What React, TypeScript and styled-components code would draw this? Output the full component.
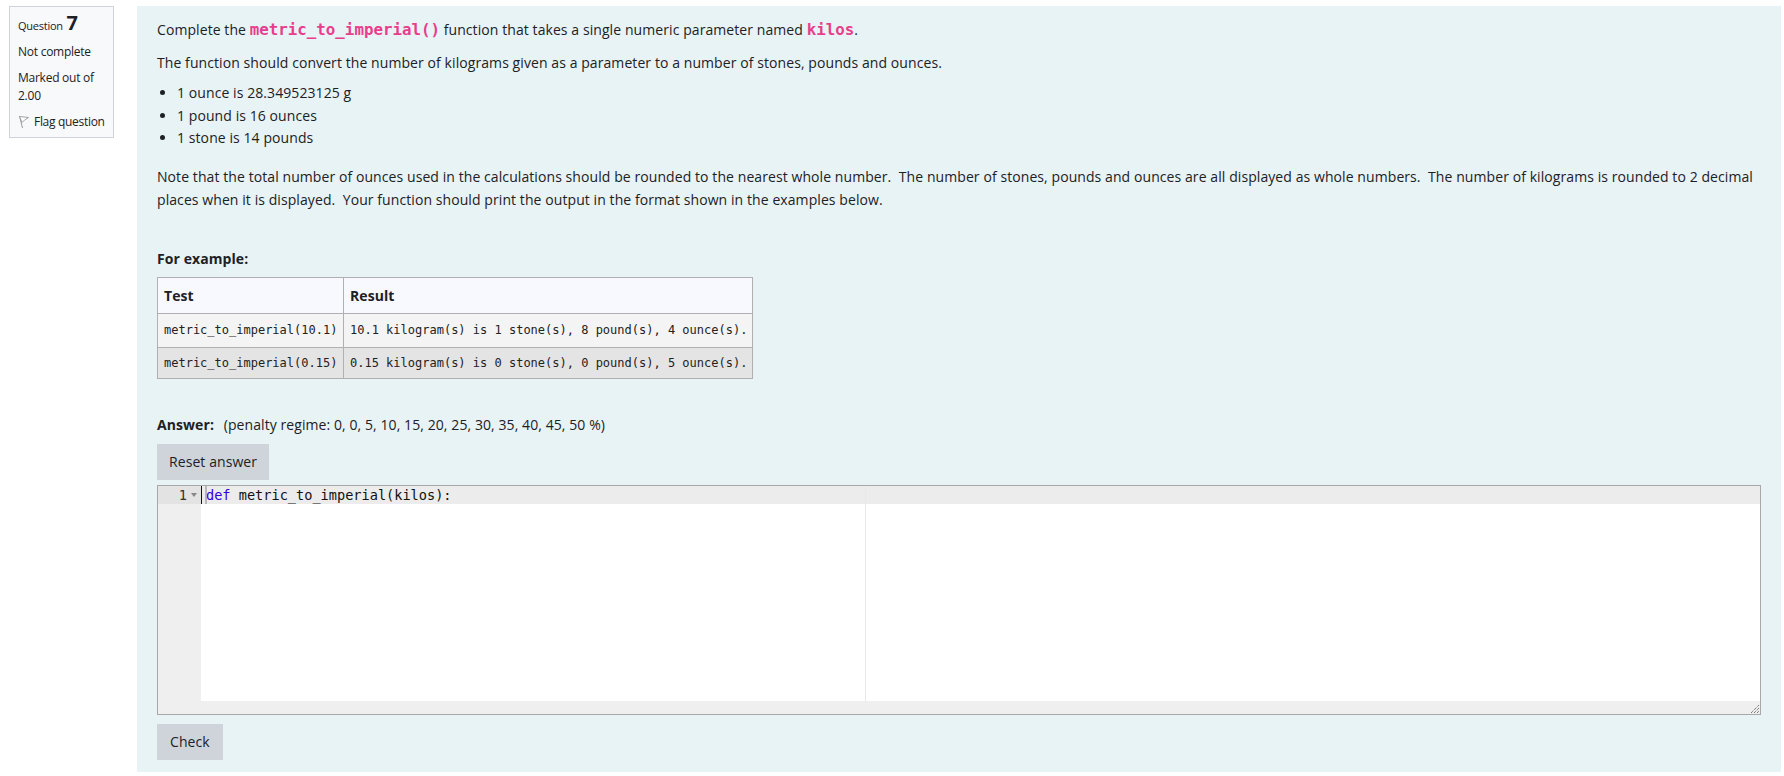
import React from "react";
import styled, { createGlobalStyle } from "styled-components";

const GlobalStyle = createGlobalStyle`
  html, body { margin: 0; padding: 0; background: #fff; }
  body {
    font-family: "Open Sans", "Noto Sans", sans-serif;
    font-size: 14px;
    color: #1d2125;
  }
`;

const Page = styled.div`
  display: flex;
  align-items: flex-start;
  height: 776px;
  padding: 6px 3px 4px 9px;
  box-sizing: border-box;
  overflow: hidden;
`;

const InfoBox = styled.aside`
  width: 105px;
  height: 132px;
  box-sizing: border-box;
  flex: none;
  margin-right: 23px;
  padding: 6px 8px 0;
  background: #f8f9fa;
  border: 1px solid #cfd4db;
  font-size: 12px;
  letter-spacing: -0.25px;
  line-height: 18px;
`;

const QuestionNo = styled.h3`
  margin: 0 0 7px;
  font-size: 11px;
  font-weight: 400;
  line-height: 20px;

  span {
    font-size: 20px;
    font-weight: 700;
    margin-left: 1px;
  }
`;

const InfoLine = styled.div`
  margin-bottom: 8px;
`;

const FlagRow = styled.div`
  display: flex;
  align-items: center;
  gap: 4px;
  margin-top: 8px;
  letter-spacing: -0.3px;
  white-space: nowrap;
`;

const Panel = styled.main`
  flex: 1;
  height: 766px;
  box-sizing: border-box;
  padding: 12px 20px 0;
  background: #e7f3f5;
  letter-spacing: 0.08px;
`;

const Para = styled.p`
  margin: 0;
  line-height: 23px;
`;

const IntroPara = styled(Para)<{ $gap: number }>`
  margin-bottom: ${({ $gap }) => $gap}px;
`;

const Inline = styled.code`
  font-family: "DejaVu Sans Mono", monospace;
  font-weight: 700;
  font-size: 15.8px;
  letter-spacing: 0;
  color: #e83e8c;
`;

const Bullets = styled.ul`
  margin: 0 0 15px;
  padding-left: 20px;

  li {
    line-height: 22.5px;
  }
`;

const Example = styled.h4`
  margin: 36px 0 6px;
  font-size: 14px;
  font-weight: 700;
  line-height: 24px;
`;

const Table = styled.table`
  border-collapse: collapse;
  width: 595px;
  table-layout: fixed;
  background: #f8f9ff;
`;

const HeadCell = styled.th<{ $wide?: boolean }>`
  height: 36px;
  width: ${({ $wide }) => ($wide ? "409px" : "186px")};
  padding: 0 6px;
  box-sizing: border-box;
  border: 1px solid #b0b0b0;
  text-align: left;
  font-size: 14px;
`;

const Row = styled.tr<{ $shade: boolean }>`
  height: ${({ $shade }) => ($shade ? "31px" : "34px")};
  background: ${({ $shade }) => ($shade ? "#e4e4e4" : "#f4f4f4")};
`;

const Cell = styled.td`
  padding: 0 6px;
  border: 1px solid #b0b0b0;
  font-family: "DejaVu Sans Mono", monospace;
  font-size: 12px;
  letter-spacing: 0;
  white-space: nowrap;
  color: #222;
`;

const AnswerLine = styled.div`
  margin-top: 34px;
  line-height: 24px;

  strong {
    margin-right: 6px;
  }
`;

const Button = styled.button<{ $pad: number }>`
  display: block;
  height: 36px;
  padding: 0 ${({ $pad }) => $pad}px;
  border: 0;
  background: #ced4da;
  color: #1d2125;
  font: inherit;
  letter-spacing: inherit;
`;

const ResetButton = styled(Button)`
  margin-top: 7px;
`;

const CheckButton = styled(Button)`
  margin-top: 9px;
`;

const Editor = styled.div`
  position: relative;
  display: flex;
  width: 1604px;
  height: 230px;
  margin-top: 5px;
  box-sizing: border-box;
  border: 1px solid #a8a8a8;
  background: #efefef;
  font-family: "DejaVu Sans Mono", monospace;
  font-size: 13.6px;
  letter-spacing: 0;
`;

const Gutter = styled.div`
  width: 43px;
  flex: none;
`;

const GutterActive = styled.div`
  display: flex;
  align-items: center;
  justify-content: flex-end;
  gap: 4px;
  height: 18px;
  padding-right: 4px;
  box-sizing: border-box;
  background: #e3e3e3;
  color: #333;
`;

const FoldMark = styled.span`
  width: 0;
  height: 0;
  border-left: 3px solid transparent;
  border-right: 3px solid transparent;
  border-top: 4px solid #888;
`;

const CodeArea = styled.div`
  position: relative;
  flex: 1;
  height: 215px;
  background: #fff;
`;

const ActiveLine = styled.div`
  position: relative;
  display: flex;
  align-items: center;
  height: 18px;
  padding-left: 4px;
  box-sizing: border-box;
  background: #ececec;
  border-left: 1px solid #111;
  color: #111;
  white-space: pre;

  &::before {
    content: "";
    position: absolute;
    left: 3px;
    top: 0;
    bottom: 0;
    width: 2px;
    background: #b8b8b8;
  }
`;

const Keyword = styled.span`
  position: relative;
  color: #3300e0;
`;

const PrintMargin = styled.div`
  position: absolute;
  top: 0;
  bottom: 0;
  left: 664px;
  width: 1px;
  background: #e8e8e8;
`;

const ResizeGrip = styled.svg`
  position: absolute;
  right: 1px;
  bottom: 1px;
`;

const FlagIcon = () => (
  <svg width="12" height="14" viewBox="0 0 12 14" fill="none">
    <path d="M1.5 1 L4.5 13" stroke="#999" strokeWidth="1" />
    <path d="M1.5 1.5 L10.5 2.5 L6.5 5 L4 7.5 Z" fill="#fff" stroke="#999" strokeWidth="0.9" />
  </svg>
);

const rows = [
  ["metric_to_imperial(10.1)", "10.1 kilogram(s) is 1 stone(s), 8 pound(s), 4 ounce(s)."],
  ["metric_to_imperial(0.15)", "0.15 kilogram(s) is 0 stone(s), 0 pound(s), 5 ounce(s)."],
];

export default function App() {
  return (
    <>
      <GlobalStyle />
      <Page>
        <InfoBox>
          <QuestionNo>Question <span>7</span></QuestionNo>
          <InfoLine>Not complete</InfoLine>
          <InfoLine>Marked out of<br />2.00</InfoLine>
          <FlagRow><FlagIcon /> Flag question</FlagRow>
        </InfoBox>
        <Panel>
          <IntroPara $gap={10}>
            Complete the <Inline>metric_to_imperial()</Inline> function that takes a single numeric parameter named <Inline>kilos</Inline>.
          </IntroPara>
          <IntroPara $gap={8}>
            The function should convert the number of kilograms given as a parameter to a number of stones, pounds and ounces.
          </IntroPara>
          <Bullets>
            <li>1 ounce is 28.349523125 g</li>
            <li>1 pound is 16 ounces</li>
            <li>1 stone is 14 pounds</li>
          </Bullets>
          <Para>
            Note that the total number of ounces used in the calculations should be rounded to the nearest whole number.&nbsp; The number of stones, pounds and ounces are all displayed as whole numbers.&nbsp; The number of kilograms is rounded to 2 decimal places when it is displayed.&nbsp; Your function should print the output in the format shown in the examples below.
          </Para>
          <Example>For example:</Example>
          <Table>
            <thead>
              <tr>
                <HeadCell>Test</HeadCell>
                <HeadCell $wide>Result</HeadCell>
              </tr>
            </thead>
            <tbody>
              {rows.map(([test, result], i) => (
                <Row key={test} $shade={i === 1}>
                  <Cell>{test}</Cell>
                  <Cell>{result}</Cell>
                </Row>
              ))}
            </tbody>
          </Table>
          <AnswerLine>
            <strong>Answer:</strong> (penalty regime: 0, 0, 5, 10, 15, 20, 25, 30, 35, 40, 45, 50 %)
          </AnswerLine>
          <ResetButton $pad={12}>Reset answer</ResetButton>
          <Editor>
            <Gutter>
              <GutterActive>1 <FoldMark /></GutterActive>
            </Gutter>
            <CodeArea>
              <ActiveLine><Keyword>def</Keyword> metric_to_imperial(kilos):</ActiveLine>
              <PrintMargin />
            </CodeArea>
            <ResizeGrip width="8" height="8" viewBox="0 0 8 8">
              <path d="M0 8 L8 0 M3 8 L8 3 M6 8 L8 6" stroke="#333" strokeWidth="0.9" strokeDasharray="1 1" />
            </ResizeGrip>
          </Editor>
          <CheckButton $pad={13}>Check</CheckButton>
        </Panel>
      </Page>
    </>
  );
}
